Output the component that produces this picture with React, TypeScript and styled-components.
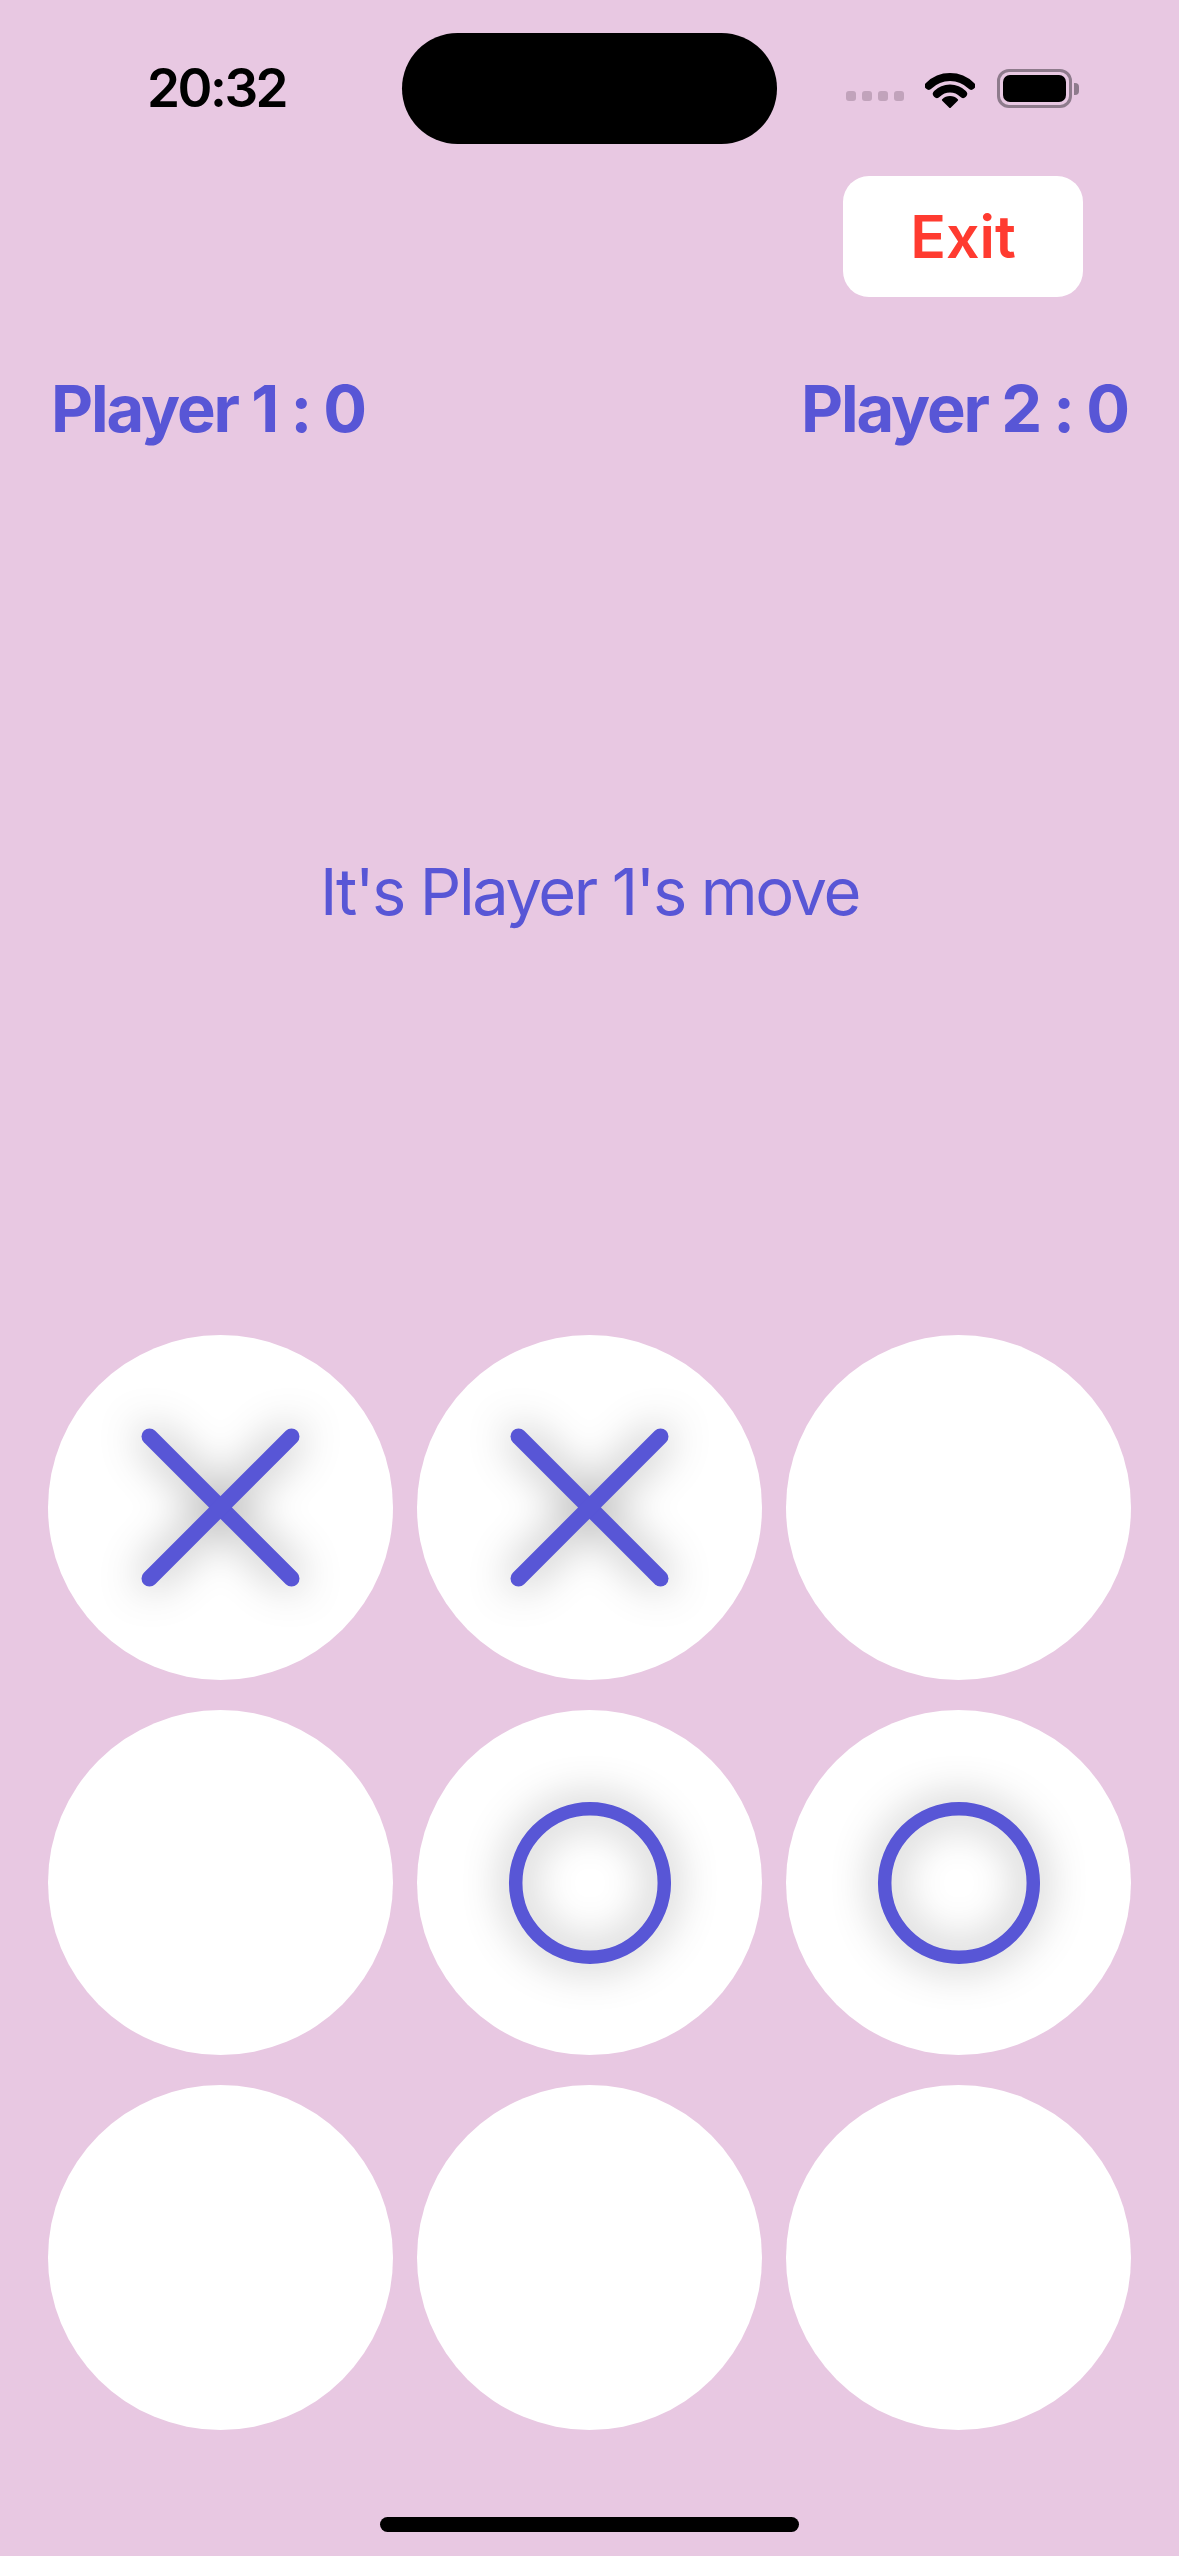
import React from "react";
import styled, { createGlobalStyle } from "styled-components";

const Global = createGlobalStyle`
  html, body { margin: 0; padding: 0; background: #e8c8e2; }
  * { box-sizing: border-box; }
`;

const Screen = styled.div`
  width: 1179px;
  height: 2556px;
  background: #e8c8e2;
  display: flex;
  flex-direction: column;
  font-family: Inter, "Noto Sans", sans-serif;
  overflow: hidden;
`;

const StatusBar = styled.div`
  margin-top: 33px;
  height: 111px;
  display: flex;
  align-items: center;
`;

const TimeSlot = styled.div`
  width: 402px;
  padding-left: 147px;
  font-size: 53px;
  font-weight: 600;
  line-height: 1;
  color: #000;
  letter-spacing: -2.5px;
`;

const Island = styled.div`
  width: 375px;
  height: 111px;
  border-radius: 56px;
  background: #000;
`;

const StatusIcons = styled.div`
  flex: 1;
  display: flex;
  align-items: center;
  padding-left: 69px;
`;

const SignalDots = styled.div`
  display: flex;
  gap: 6px;
  margin-top: 15px;
  margin-right: 21px;
`;

const Dot = styled.span`
  width: 10px;
  height: 10px;
  border-radius: 3px;
  background: #c1a3bb;
`;

const Battery = styled.div`
  margin-left: 22px;
  display: flex;
  align-items: center;
`;

const BatteryBody = styled.div`
  width: 75px;
  height: 39px;
  border: 3.5px solid #8e7b8c;
  border-radius: 12px;
  padding: 3px;
  display: flex;
`;

const BatteryFill = styled.div`
  flex: 1;
  background: #000;
  border-radius: 7px;
`;

const BatteryNub = styled.div`
  width: 5px;
  height: 12px;
  margin-left: 2px;
  border-radius: 0 4px 4px 0;
  background: #8e7b8c;
`;

const ExitRow = styled.div`
  margin-top: 32px;
  display: flex;
  justify-content: flex-end;
  padding-right: 96px;
`;

const ExitButton = styled.button`
  width: 240px;
  height: 121px;
  border: none;
  border-radius: 26px;
  background: #ffffff;
  color: #ff3b30;
  font-family: Inter, "Noto Sans", sans-serif;
  font-size: 59px;
  font-weight: 600;
  line-height: 1;
  padding: 0;
  cursor: pointer;
`;

const ScoreRow = styled.div`
  margin-top: 79px;
  display: flex;
  justify-content: space-between;
  padding: 0 51px;
`;

const Score = styled.div`
  font-size: 65px;
  font-weight: 700;
  line-height: 1;
  color: #5856d6;
  letter-spacing: -2.1px;
`;

const Message = styled.div`
  margin-top: 418px;
  text-align: center;
  font-size: 65px;
  font-weight: 400;
  line-height: 1;
  color: #5856d6;
  letter-spacing: -2.4px;
`;

const Board = styled.div`
  margin-top: 411px;
  padding-left: 48px;
  display: grid;
  grid-template-columns: repeat(3, 345px);
  column-gap: 24px;
  row-gap: 30px;
`;

const Cell = styled.button`
  width: 345px;
  height: 345px;
  border-radius: 50%;
  border: none;
  padding: 0;
  background: #ffffff;
  display: flex;
  align-items: center;
  justify-content: center;
  cursor: pointer;
`;

const Mark = styled.svg`
  width: 162px;
  height: 162px;
  overflow: visible;
  filter: drop-shadow(0 0 22px rgba(0, 0, 0, 0.38));
`;

const HomeIndicator = styled.div`
  margin: 87px auto 0;
  width: 419px;
  height: 15px;
  border-radius: 8px;
  background: #000;
`;

const INDIGO = "#5856d6";

const XMark = () => (
  <Mark viewBox="0 0 162 162">
    <g stroke={INDIGO} strokeWidth={16} strokeLinecap="round">
      <line x1={9.5} y1={9.5} x2={151.5} y2={151.5} />
      <line x1={151.5} y1={9.5} x2={9.5} y2={151.5} />
    </g>
  </Mark>
);

const OMark = () => (
  <Mark viewBox="0 0 162 162">
    <circle cx={81} cy={81} r={74.3} fill="none" stroke={INDIGO} strokeWidth={13.5} />
  </Mark>
);

const arc = (cx: number, cy: number, r: number) => {
  const s = Math.SQRT1_2;
  return `M ${cx - r * s} ${cy - r * s} A ${r} ${r} 0 0 1 ${cx + r * s} ${cy - r * s}`;
};

const WifiIcon = () => {
  const cx = 25;
  const cy = 37;
  const s = Math.SQRT1_2;
  return (
    <svg width="50" height="38" viewBox="0 0 50 38">
      <g fill="none" stroke="#000" strokeWidth={8} strokeLinecap="round">
        <path d={arc(cx, cy, 30)} />
        <path d={arc(cx, cy, 18.5)} />
      </g>
      <path
        d={`M ${cx} ${cy} L ${cx - 10 * s} ${cy - 10 * s} A 10 10 0 0 1 ${cx + 10 * s} ${cy - 10 * s} Z`}
        fill="#000"
        stroke="#000"
        strokeWidth={2}
        strokeLinejoin="round"
      />
    </svg>
  );
};

type CellValue = "X" | "O" | null;

const board: CellValue[] = ["X", "X", null, null, "O", "O", null, null, null];

export default function App() {
  return (
    <>
      <Global />
      <Screen>
        <StatusBar>
          <TimeSlot>20:32</TimeSlot>
          <Island />
          <StatusIcons>
            <SignalDots>
              <Dot />
              <Dot />
              <Dot />
              <Dot />
            </SignalDots>
            <WifiIcon />
            <Battery>
              <BatteryBody>
                <BatteryFill />
              </BatteryBody>
              <BatteryNub />
            </Battery>
          </StatusIcons>
        </StatusBar>
        <ExitRow>
          <ExitButton>Exit</ExitButton>
        </ExitRow>
        <ScoreRow>
          <Score>Player 1 : 0</Score>
          <Score>Player 2 : 0</Score>
        </ScoreRow>
        <Message>It's Player 1's move</Message>
        <Board>
          {board.map((v, i) => (
            <Cell key={i}>
              {v === "X" && <XMark />}
              {v === "O" && <OMark />}
            </Cell>
          ))}
        </Board>
        <HomeIndicator />
      </Screen>
    </>
  );
}
